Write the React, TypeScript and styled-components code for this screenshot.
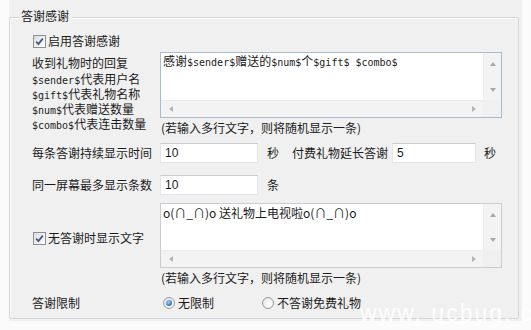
import React from "react";
import styled, { createGlobalStyle } from "styled-components";

const Global = createGlobalStyle`
  html, body { margin: 0; padding: 0; background: #fbfbfb; }
  body {
    font-family: "Noto Sans CJK SC", "Noto Sans", sans-serif;
    font-size: 12px;
    color: #1b1b1b;
  }
`;

const Page = styled.div`
  position: relative;
  width: 531px;
  height: 330px;
  overflow: hidden;
  padding-left: 9px;
  box-sizing: border-box;
`;

const Panel = styled.div`
  width: 513px;
  background: #f0f0f0;
  padding-top: 17px;
  padding-bottom: 2px;
`;

const Group = styled.div`
  width: 510px;
  height: 302px;
  box-sizing: border-box;
  border: 1px solid #d2d6da;
  border-radius: 2px;
  box-shadow: inset 1px 1px 0 #fdfdfd;
  padding: 0 0 0 22px;
`;

const Title = styled.div`
  width: fit-content;
  height: 16px;
  line-height: 16px;
  margin: -10px 0 0 -12px;
  padding: 0 3px 0 1px;
  background: #f0f0f0;
`;

const CheckRow = styled.label<{ $mt?: number }>`
  display: flex;
  align-items: center;
  gap: 2px;
  height: 16px;
  line-height: 16px;
  margin-top: ${(p) => p.$mt ?? 0}px;
  margin-left: 1px;
`;

const CheckBoxBox = styled.span`
  display: inline-flex;
  align-items: center;
  justify-content: center;
  width: 13px;
  height: 13px;
  box-sizing: border-box;
  border: 1px solid #8e8f8f;
  background: linear-gradient(135deg, #dcdcdc 0%, #f6f6f6 70%, #ffffff 100%);
`;

const Section = styled.div<{ $mt: number }>`
  display: grid;
  grid-template-columns: 128px 342px;
  margin-top: ${(p) => p.$mt}px;
`;

const LabelCol = styled.div<{ $pt: number }>`
  padding-top: ${(p) => p.$pt}px;
`;

const Line = styled.div<{ $lh: number }>`
  line-height: ${(p) => p.$lh}px;
  height: ${(p) => p.$lh}px;
  white-space: nowrap;
`;

const Mono = styled.span`
  font-family: "DejaVu Sans Mono", "Liberation Mono", monospace;
  font-size: 10px;
`;

const ScrollBox = styled.div<{ $h: number; $border: string }>`
  display: grid;
  grid-template-columns: 1fr 18px;
  grid-template-rows: 1fr 17px;
  width: 342px;
  height: ${(p) => p.$h}px;
  box-sizing: border-box;
  border: 1px solid ${(p) => p.$border};
  background: #fff;
`;

const BoxText = styled.div<{ $pt: number }>`
  padding: ${(p) => p.$pt}px 2px 0 2px;
  line-height: 16px;
  white-space: nowrap;
  overflow: hidden;
`;

const VBar = styled.div`
  display: flex;
  flex-direction: column;
  justify-content: space-between;
  align-items: center;
  padding: 9px 0 8px;
  background: #f3f3f3;
  border-left: 1px solid #ececec;
`;

const HBar = styled.div`
  display: flex;
  justify-content: space-between;
  align-items: center;
  padding: 0 7px 0 8px;
  background: #f3f3f3;
  border-top: 1px solid #ececec;
`;

const Corner = styled.div`
  background: #f0f0f0;
`;

const Arrow = styled.span<{ $dir: "up" | "down" | "left" | "right" }>`
  width: 0;
  height: 0;
  border-style: solid;
  ${(p) =>
    p.$dir === "up"
      ? "border-width: 0 3px 4px 3px; border-color: transparent transparent #a9a9a9 transparent;"
      : p.$dir === "down"
      ? "border-width: 4px 3px 0 3px; border-color: #a9a9a9 transparent transparent transparent;"
      : p.$dir === "left"
      ? "border-width: 3px 4px 3px 0; border-color: transparent #b4b4b4 transparent transparent;"
      : "border-width: 3px 0 3px 4px; border-color: transparent transparent transparent #b4b4b4;"}
`;

const Hint = styled.div`
  margin-top: 2px;
  padding-left: 1px;
  height: 16px;
  line-height: 16px;
  white-space: nowrap;
`;

const FieldRow = styled.div<{ $mt: number }>`
  display: flex;
  align-items: center;
  height: 20px;
  margin-top: ${(p) => p.$mt}px;
  white-space: nowrap;
`;

const FieldLabel = styled.span`
  width: 128px;
  line-height: 16px;
`;

const Input = styled.div<{ $w: number; $ml?: number }>`
  width: ${(p) => p.$w}px;
  height: 20px;
  margin-left: ${(p) => p.$ml ?? 0}px;
  box-sizing: border-box;
  border: 1px solid #e3e5ea;
  border-top-color: #c9cbd0;
  background: #fff;
  padding-left: 4px;
  line-height: 18px;
  font-family: "Liberation Sans", "Noto Sans", sans-serif;
  font-size: 12px;
`;

const Text = styled.span<{ $ml: number }>`
  margin-left: ${(p) => p.$ml}px;
  line-height: 16px;
`;

const RadioRow = styled.div`
  display: flex;
  align-items: center;
  height: 16px;
  margin-top: 9px;
  white-space: nowrap;
`;

const RadioOption = styled.label<{ $w?: number }>`
  display: flex;
  align-items: center;
  gap: 3px;
  width: ${(p) => (p.$w ? `${p.$w}px` : "auto")};
  line-height: 16px;
`;

const RadioDot = styled.span<{ $on?: boolean }>`
  display: inline-flex;
  align-items: center;
  justify-content: center;
  width: 12px;
  height: 12px;
  box-sizing: border-box;
  border-radius: 50%;
  border: 1px solid #9a9c9e;
  background: radial-gradient(circle at 60% 60%, #ffffff 0%, #e9e9e9 70%, #d6d6d6 100%);
  margin-left: ${(p) => (p.$on ? 3 : 0)}px;
  &::after {
    content: "";
    display: ${(p) => (p.$on ? "block" : "none")};
    width: 6px;
    height: 6px;
    border-radius: 50%;
    background: radial-gradient(circle at 40% 35%, #a9d8ff 0%, #3b83c4 55%, #1f4f86 100%);
  }
`;

const Watermark = styled.div`
  position: absolute;
  left: 360px;
  top: 300px;
  font-family: "Liberation Sans", sans-serif;
  font-size: 23px;
  letter-spacing: 2px;
  color: rgba(255, 255, 255, 0.9);
  white-space: nowrap;
  pointer-events: none;
`;

const CheckBox = () => (
  <CheckBoxBox>
    <svg width="9" height="9" viewBox="0 0 9 9">
      <path d="M1.2 4.6 L3.4 7 L7.8 1.6" fill="none" stroke="#3f5a8a" strokeWidth="1.8" />
    </svg>
  </CheckBoxBox>
);

type SBProps = { h: number; border: string; pt: number; children: React.ReactNode };
const ScrollText = ({ h, border, pt, children }: SBProps) => (
  <ScrollBox $h={h} $border={border}>
    <BoxText $pt={pt}>{children}</BoxText>
    <VBar>
      <Arrow $dir="up" />
      <Arrow $dir="down" />
    </VBar>
    <HBar>
      <Arrow $dir="left" />
      <Arrow $dir="right" />
    </HBar>
    <Corner />
  </ScrollBox>
);

const HINT = "(若输入多行文字，则将随机显示一条)";

export default function App() {
  return (
    <>
      <Global />
      <Page>
        <Panel>
          <Group>
            <Title>答谢感谢</Title>
            <CheckRow $mt={9}>
              <CheckBox />
              <span>启用答谢感谢</span>
            </CheckRow>

            <Section $mt={3}>
              <LabelCol $pt={3}>
                <Line $lh={16}>收到礼物时的回复</Line>
                <Line $lh={15}>
                  <Mono>$sender$</Mono>代表用户名
                </Line>
                <Line $lh={15}>
                  <Mono>$gift$</Mono>代表礼物名称
                </Line>
                <Line $lh={15}>
                  <Mono>$num$</Mono>代表赠送数量
                </Line>
                <Line $lh={15}>
                  <Mono>$combo$</Mono>代表连击数量
                </Line>
              </LabelCol>
              <div>
                <ScrollText h={66} border="#a9bccf" pt={0}>
                  感谢<Mono>$sender$</Mono>赠送的<Mono>$num$</Mono>个<Mono>$gift$ $combo$</Mono>
                </ScrollText>
                <Hint>{HINT}</Hint>
              </div>
            </Section>

            <FieldRow $mt={7}>
              <FieldLabel>每条答谢持续显示时间</FieldLabel>
              <Input $w={98}>10</Input>
              <Text $ml={9}>秒</Text>
              <Text $ml={13}>付费礼物延长答谢</Text>
              <Input $w={84} $ml={4}>5</Input>
              <Text $ml={8}>秒</Text>
            </FieldRow>

            <FieldRow $mt={12}>
              <FieldLabel>同一屏幕最多显示条数</FieldLabel>
              <Input $w={98}>10</Input>
              <Text $ml={9}>条</Text>
            </FieldRow>

            <Section $mt={8}>
              <LabelCol $pt={27}>
                <CheckRow>
                  <CheckBox />
                  <span>无答谢时显示文字</span>
                </CheckRow>
              </LabelCol>
              <div>
                <ScrollText h={65} border="#c8cdd3" pt={1}>
                  o(∩_∩)o 送礼物上电视啦o(∩_∩)o
                </ScrollText>
                <Hint>{HINT}</Hint>
              </div>
            </Section>

            <RadioRow>
              <FieldLabel>答谢限制</FieldLabel>
              <RadioOption $w={102}>
                <RadioDot $on />
                <span>无限制</span>
              </RadioOption>
              <RadioOption>
                <RadioDot />
                <span>不答谢免费礼物</span>
              </RadioOption>
            </RadioRow>
          </Group>
        </Panel>
        <Watermark>www. ucbug. cc</Watermark>
      </Page>
    </>
  );
}
